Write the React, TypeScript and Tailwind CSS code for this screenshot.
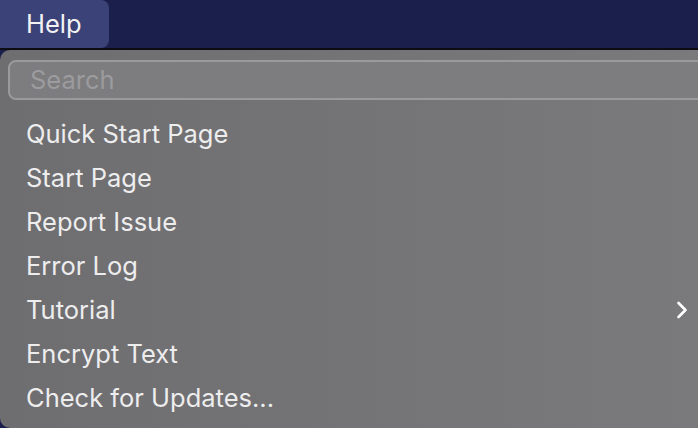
import React from "react";

const items = [
  "Quick Start Page",
  "Start Page",
  "Report Issue",
  "Error Log",
  "Tutorial",
  "Encrypt Text",
  "Check for Updates...",
];

export default function App() {
  return (
    <div
      className="w-[698px] h-[428px] overflow-hidden flex flex-col bg-[#1b1f4b]"
      style={{ fontFamily: "Inter, 'Noto Sans', sans-serif" }}
    >
      <div className="h-[48px] shrink-0 flex">
        <div className="w-[109px] h-full bg-[#3b4277] rounded-r-[8px] flex items-center pl-[26px] text-[25.5px] text-[#f2f2f4]">
          Help
        </div>
      </div>
      <div className="h-[2px] shrink-0 bg-[#0c0c12]" />
      <div className="flex-1 bg-gradient-to-r from-[#6e6d70] to-[#7a797c] rounded-tl-[10px] rounded-bl-[10px] flex flex-col">
        <div className="mt-[10px] ml-[8px] -mr-[20px] h-[40px] rounded-[8px] border-2 border-[#9a999c] bg-[#7d7c7f] flex items-center pl-[20px] text-[25.5px] text-[#9c9b9e]">
          Search
        </div>
        <div className="flex flex-col pt-[12px]">
          {items.map((t) => (
            <div
              key={t}
              className="h-[44px] flex items-center justify-between pl-[26px] pr-[10px] text-[25.5px] text-[#ededee]"
            >
              <span>{t}</span>
              {t === "Tutorial" && (
                <svg width="12" height="18" viewBox="0 0 12 18" fill="none">
                  <path d="M2.5 2 L9.5 9 L2.5 16" stroke="#ffffff" strokeWidth="2.6" strokeLinecap="round" strokeLinejoin="round" />
                </svg>
              )}
            </div>
          ))}
        </div>
      </div>
    </div>
  );
}
